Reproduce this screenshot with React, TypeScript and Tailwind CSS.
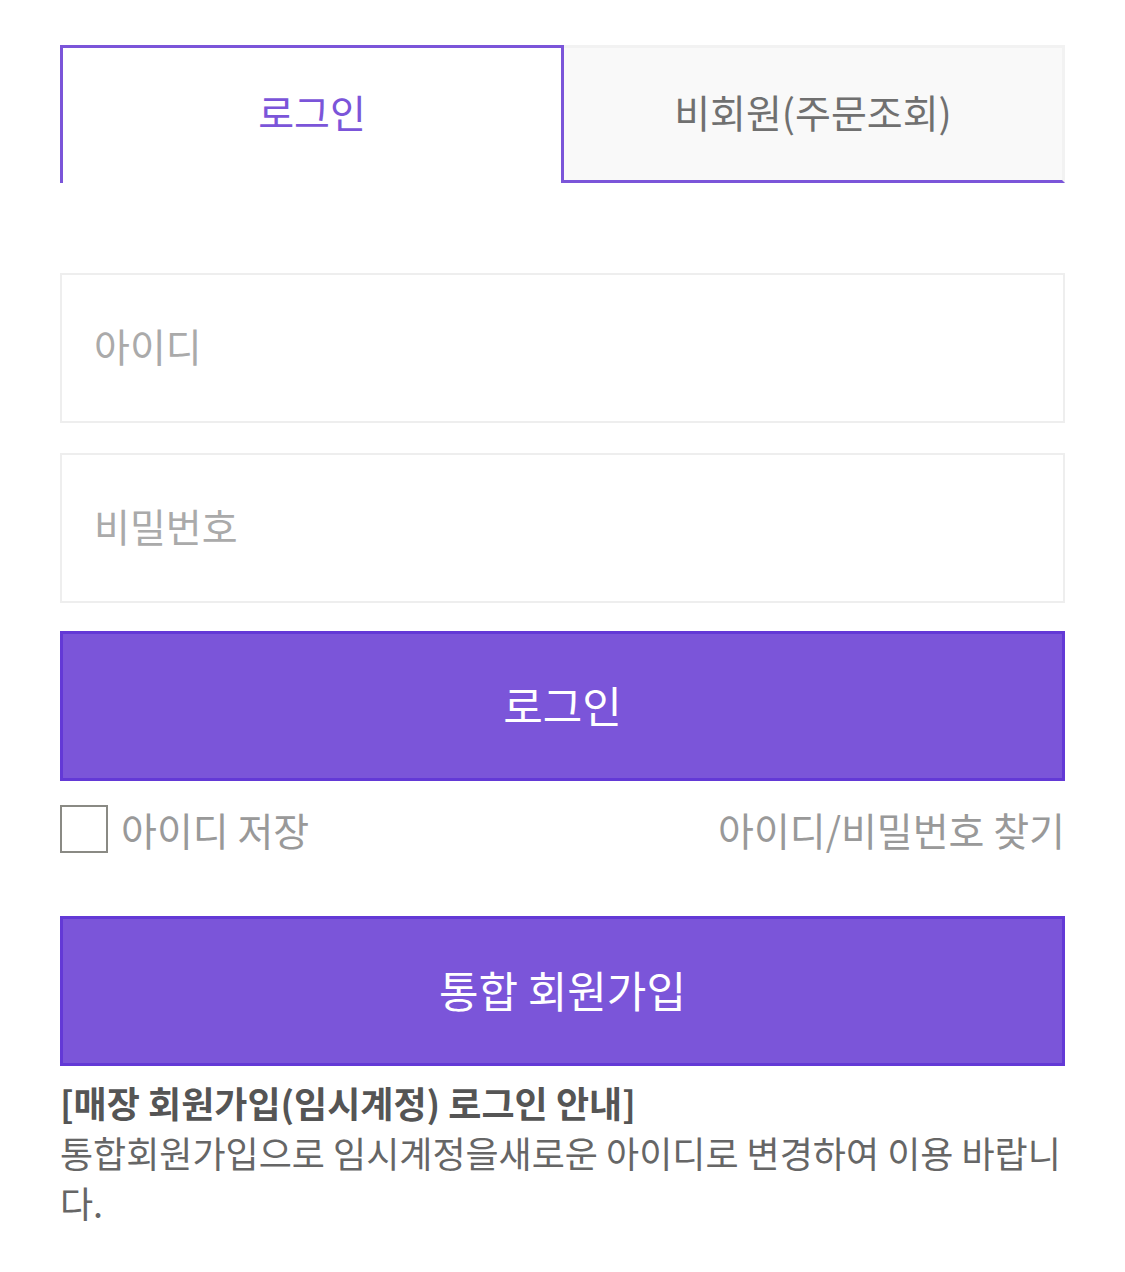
import React, { useState } from 'react';

const font = { fontFamily: '"Noto Sans CJK KR", "Noto Sans", sans-serif' };

const App: React.FC = () => {
  const [tab, setTab] = useState<'member' | 'guest'>('member');
  const [saveId, setSaveId] = useState(false);

  return (
    <div className="min-h-screen bg-white px-[60px] pt-[45px] pb-10" style={font}>
      {/* Tabs */}
      <div className="flex h-[138px]">
        <button
          onClick={() => setTab('member')}
          className="w-[504px] border-x-[3px] border-t-[3px] border-[#7b55d9] bg-white pb-[8px] text-[39px] text-[#7b55d9]"
        >
          로그인
        </button>
        <button
          onClick={() => setTab('guest')}
          className="flex-1 border-t-[3px] border-r-[3px] border-t-[#f2f2f2] border-r-[#f2f2f2] border-b-[3px] border-b-[#7b55d9] bg-[#f9f9f9] pb-[6px] text-[39px] text-[#707070]"
        >
          비회원(주문조회)
        </button>
      </div>

      {/* Form */}
      <input
        type="text"
        placeholder="아이디"
        className="mt-[90px] block h-[150px] w-full border-2 border-[#eeeeee] px-[32px] pb-[7px] text-[39px] text-[#333] outline-none placeholder:text-[#aaaaaa]"
      />
      <input
        type="password"
        placeholder="비밀번호"
        className="mt-[30px] block h-[150px] w-full border-2 border-[#eeeeee] px-[32px] pb-[7px] text-[39px] text-[#333] outline-none placeholder:text-[#aaaaaa]"
      />
      <button className="mt-[28px] block h-[150px] w-full border-[3px] border-[#6339d6] bg-[#7b55d9] pb-[4px] text-[43px] text-white">
        로그인
      </button>

      <div className="mt-[24px] flex h-[48px] items-center justify-between">
        <label className="flex items-center gap-[13px] text-[39px] text-[#999]">
          <span
            onClick={() => setSaveId(!saveId)}
            className="h-[48px] w-[48px] border-2 border-[#8a8a84] bg-white"
          >
            {saveId && (
              <svg viewBox="0 0 24 24" className="h-full w-full" fill="none" stroke="#7b55d9" strokeWidth="3">
                <path d="M5 12l5 5 9-10" />
              </svg>
            )}
          </span>
          아이디 저장
        </label>
        <a className="text-[39px] text-[#999]">아이디/비밀번호 찾기</a>
      </div>

      <button className="mt-[63px] block h-[150px] w-full border-[3px] border-[#6339d6] bg-[#7b55d9] pb-[4px] text-[43px] text-white">
        통합 회원가입
      </button>

      <div className="mt-[11px] text-[36px] leading-[50px] text-[#666]">
        <p className="font-bold text-[#555]">[매장 회원가입(임시계정) 로그인 안내]</p>
        <p>통합회원가입으로 임시계정을새로운 아이디로 변경하여 이용 바랍니다.</p>
      </div>
    </div>
  );
};

export default App;
